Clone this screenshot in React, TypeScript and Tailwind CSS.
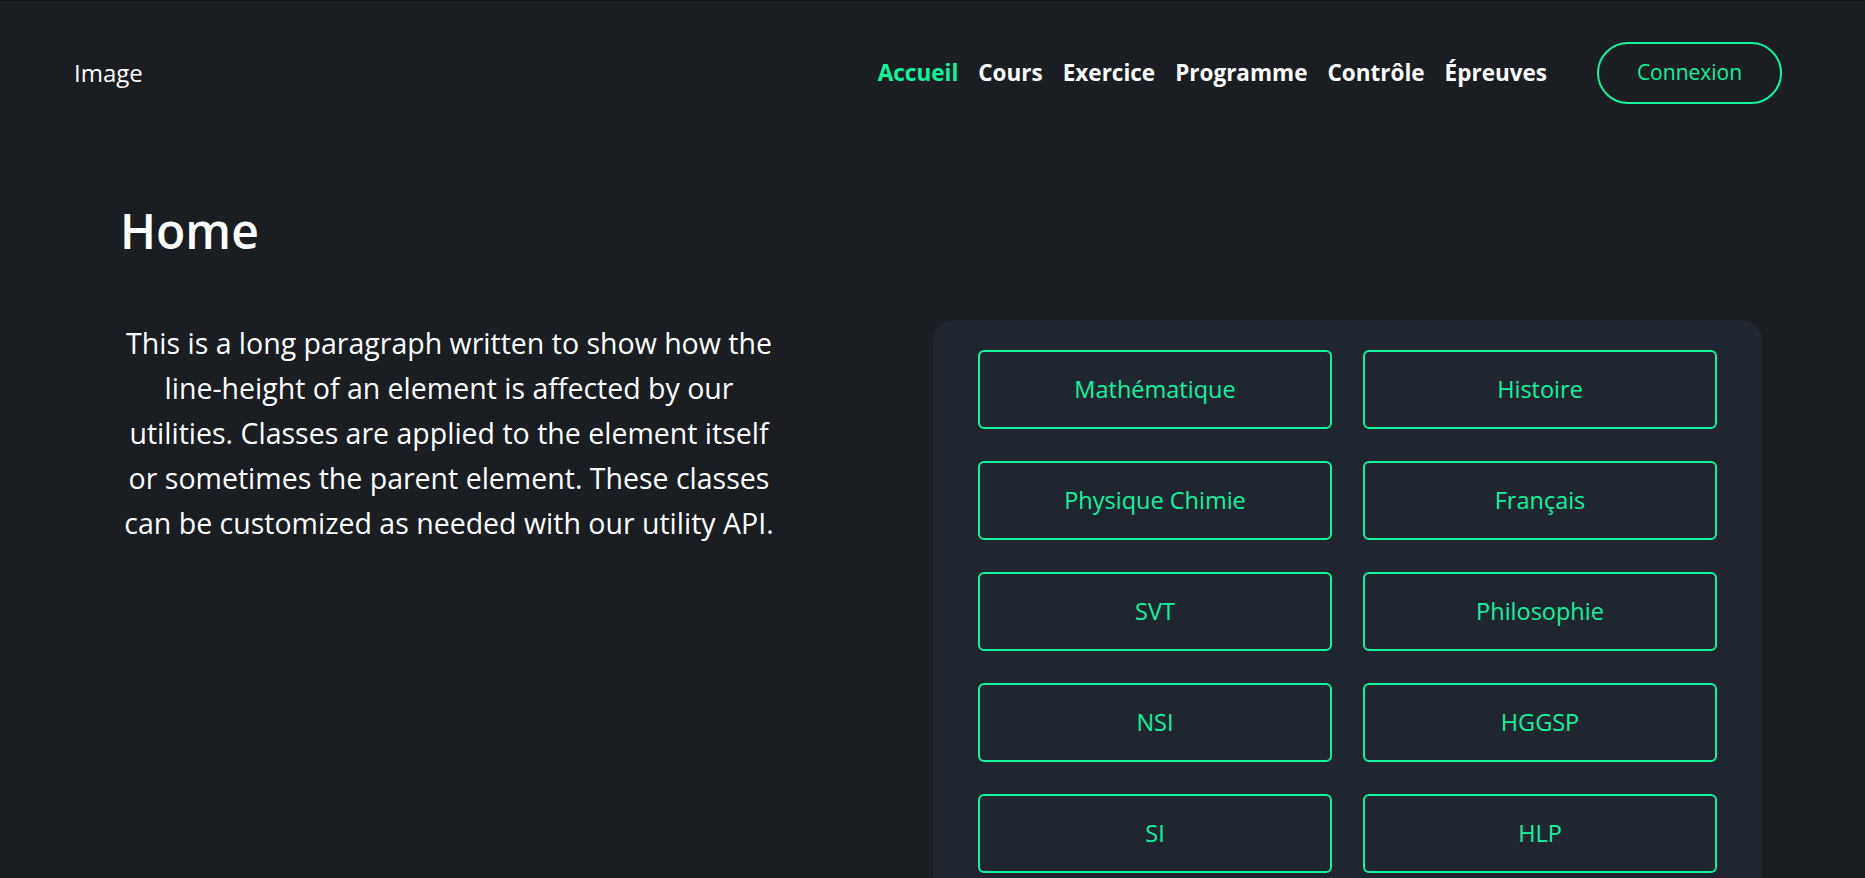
const navLinks = ['Accueil', 'Cours', 'Exercice', 'Programme', 'Contrôle', 'Épreuves']

const subjects = [
  'Mathématique',
  'Histoire',
  'Physique Chimie',
  'Français',
  'SVT',
  'Philosophie',
  'NSI',
  'HGGSP',
  'SI',
  'HLP',
]

export default function App() {
  return (
    <div
      className="min-h-screen bg-[#1a1d21] text-white border-t border-[#0d0e10]"
      style={{ fontFamily: '"Open Sans", "Noto Sans", sans-serif' }}
    >
      <header className="h-[144px] flex items-center justify-between pl-[74px] pr-[83px]">
        <span className="text-[24px]">Image</span>
        <div className="flex items-center gap-[50px]">
          <nav className="flex items-center gap-[20px]">
            {navLinks.map((link, i) => (
              <a
                key={link}
                href="#"
                className={`text-[22.5px] font-bold ${i === 0 ? 'text-[#10f59b]' : 'text-white'}`}
              >
                {link}
              </a>
            ))}
          </nav>
          <button className="w-[185px] h-[62px] rounded-full border-2 border-[#10f59b] text-[#10f59b] text-[21px]">
            Connexion
          </button>
        </div>
      </header>

      <main className="pl-[120px]">
        <h1 className="text-[48px] leading-none font-semibold mt-[62px]">Home</h1>

        <div className="flex mt-[65px]">
          <div className="w-[658px] pt-[1px]">
            <p className="text-[28.5px] leading-[45px] text-center">
              This is a long paragraph written to show how the line-height of an element is affected by our
              utilities. Classes are applied to the element itself or sometimes the parent element. These
              classes can be customized as needed with our utility API.
            </p>
          </div>

          <div className="ml-[155px] w-[829px] bg-[#20262f] rounded-[20px] pt-[30px] pb-[31px] px-[45px]">
            <div className="grid grid-cols-2 gap-x-[31px] gap-y-[32px]">
              {subjects.map(subject => (
                <button
                  key={subject}
                  className="h-[79px] rounded-md border-2 border-[#10f59b] text-[#10f59b] text-[23.5px] flex items-center justify-center"
                >
                  {subject}
                </button>
              ))}
            </div>
          </div>
        </div>
      </main>
    </div>
  )
}
